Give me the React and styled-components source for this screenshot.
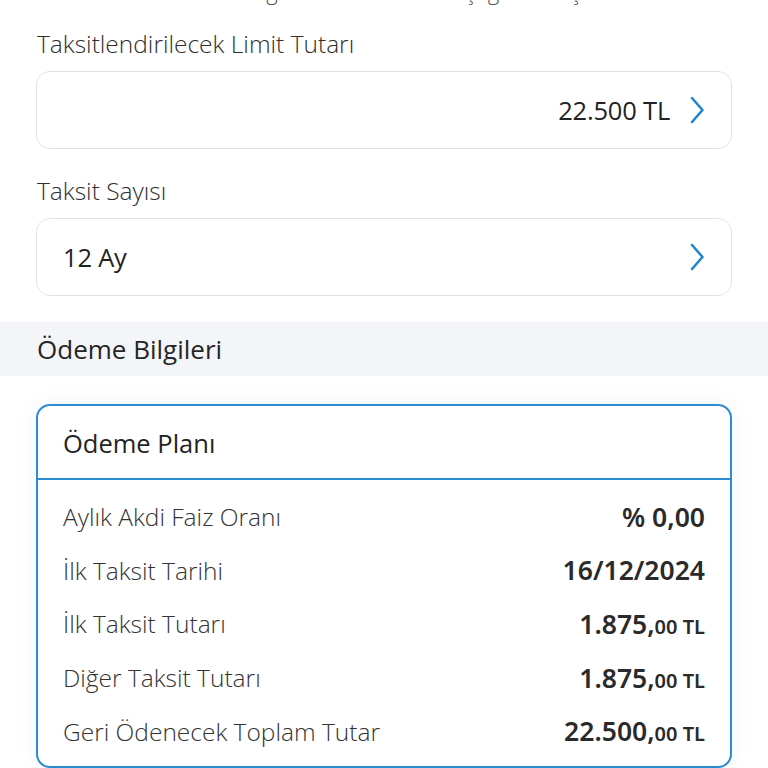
import React from "react";
import styled, { createGlobalStyle } from "styled-components";

const GlobalStyle = createGlobalStyle`
  html, body {
    margin: 0;
    padding: 0;
    background: #ffffff;
    overflow: hidden;
  }
  body {
    font-family: "Open Sans", "Noto Sans", sans-serif;
    color: #2b2b2b;
  }
`;

const Page = styled.div`
  width: 768px;
  display: flex;
  flex-direction: column;
`;

const TopClip = styled.div`
  height: 7px;
  overflow: hidden;
  padding: 0 37px;
`;

const TopNote = styled.div`
  margin-top: -21px;
  padding-left: 150px;
  font-size: 22px;
  line-height: 24px;
  font-weight: 300;
  color: #555;
  white-space: nowrap;
`;

const Fields = styled.div`
  display: flex;
  flex-direction: column;
  padding: 22px 36px 0;
`;

const FieldLabel = styled.div`
  font-size: 24.5px;
  line-height: 30px;
  font-weight: 300;
  color: #2e2e2e;
  padding-left: 1px;
  margin-top: ${(p) => (p.$first ? "0" : "27px")};
`;

const SelectBox = styled.div`
  margin-top: 12px;
  height: 78px;
  box-sizing: border-box;
  border: 1.5px solid #dfe3e8;
  border-radius: 14px;
  display: flex;
  align-items: center;
  justify-content: ${(p) => (p.$alignRight ? "flex-end" : "space-between")};
  gap: 18px;
  padding: 0 25px 0 26px;
  background: #fff;
`;

const SelectValue = styled.span`
  font-size: 25.5px;
  font-weight: 400;
  color: #222;
  letter-spacing: -0.2px;
`;

const Chevron = () => (
  <svg width="18" height="28" viewBox="0 0 18 28" fill="none">
    <path
      d="M4 2 L14.5 14 L4 26"
      stroke="#1b85d2"
      strokeWidth="2.5"
      strokeLinecap="round"
      strokeLinejoin="round"
    />
  </svg>
);

const Band = styled.div`
  margin-top: 26px;
  height: 54px;
  background: #f4f5f8;
  display: flex;
  align-items: center;
  padding: 0 37px;
  font-size: 26px;
  font-weight: 400;
  color: #262626;
`;

const CardWrap = styled.div`
  padding: 28px 36px 0;
`;

const Card = styled.div`
  border: 2px solid #2b8bd3;
  border-radius: 14px;
  background: #fff;
  box-shadow: 0 0 22px rgba(30, 50, 90, 0.05);
  overflow: hidden;
`;

const CardHeader = styled.div`
  height: 70px;
  display: flex;
  align-items: center;
  padding: 2px 25px 0;
  font-size: 25.5px;
  font-weight: 400;
  color: #242424;
  border-bottom: 2px solid #2b8bd3;
`;

const Rows = styled.div`
  display: flex;
  flex-direction: column;
  padding: 10px 25px 8px;
`;

const Row = styled.div`
  height: 53.6px;
  display: flex;
  align-items: center;
  justify-content: space-between;
`;

const RowLabel = styled.span`
  font-size: 24.5px;
  font-weight: 300;
  color: #333;
`;

const RowValue = styled.span`
  font-family: "Noto Sans", "Open Sans", sans-serif;
  font-size: 26.5px;
  font-weight: 600;
  color: #2a2a2a;
`;

const Small = styled.span`
  font-size: 20px;
  font-weight: 600;
`;

const rows = [
  { label: "Aylık Akdi Faiz Oranı", main: "% 0,00" },
  { label: "İlk Taksit Tarihi", main: "16/12/2024" },
  { label: "İlk Taksit Tutarı", main: "1.875,", small: "00 TL" },
  { label: "Diğer Taksit Tutarı", main: "1.875,", small: "00 TL" },
  { label: "Geri Ödenecek Toplam Tutar", main: "22.500,", small: "00 TL" },
];

export default function App() {
  return (
    <Page>
      <GlobalStyle />
      <TopClip>
        <TopNote>Ödeme gün ve tutarlarınızı aşağıdan seçebilirsiniz</TopNote>
      </TopClip>
      <Fields>
        <FieldLabel $first>Taksitlendirilecek Limit Tutarı</FieldLabel>
        <SelectBox $alignRight>
          <SelectValue>22.500 TL</SelectValue>
          <Chevron />
        </SelectBox>
        <FieldLabel>Taksit Sayısı</FieldLabel>
        <SelectBox>
          <SelectValue>12 Ay</SelectValue>
          <Chevron />
        </SelectBox>
      </Fields>
      <Band>Ödeme Bilgileri</Band>
      <CardWrap>
        <Card>
          <CardHeader>Ödeme Planı</CardHeader>
          <Rows>
            {rows.map((r) => (
              <Row key={r.label}>
                <RowLabel>{r.label}</RowLabel>
                <RowValue>
                  {r.main}
                  {r.small && <Small>{r.small}</Small>}
                </RowValue>
              </Row>
            ))}
          </Rows>
        </Card>
      </CardWrap>
    </Page>
  );
}
